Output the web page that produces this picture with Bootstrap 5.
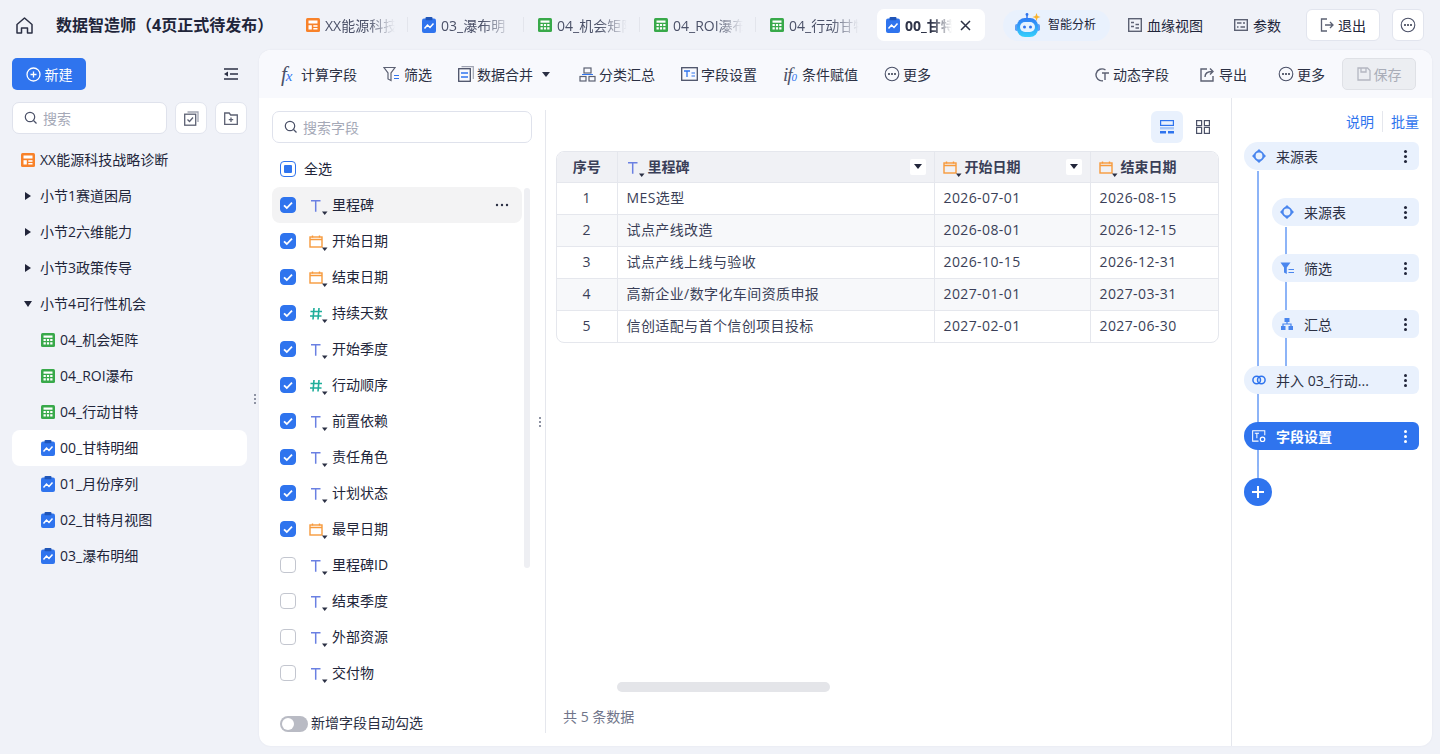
<!DOCTYPE html>
<html lang="zh-CN">
<head>
    <meta charset="UTF-8">
    <meta name="viewport" content="width=device-width, initial-scale=1.0">
    <title>数据智造师</title>
    <link href="https://cdn.jsdelivr.net/npm/bootstrap@5.3.0/dist/css/bootstrap.min.css" rel="stylesheet">
    <style>
        html, body { height: 100%; }
        body { background: #f0f2f8; color: #21253a; font-family: "Open Sans", "Noto Sans CJK SC", sans-serif; font-size: 14px; overflow: hidden; }
        svg { display: block; flex: none; }
        .app-shell { width: 1440px; height: 754px; }

        /* top bar */
        .top-bar { height: 50px; padding-left: 16px; }
        .home-link { width: 17px; margin-right: 23px; }
        .top-title { width: 230px; font-size: 16px; font-weight: 700; color: #21253a; white-space: nowrap; }
        .tab-strip { margin-left: 10px; }
        .page-tab { width: 116px; height: 32px; padding-left: 10px; gap: 5px; position: relative; color: #4b5168; }
        .page-tab::after { content: ""; position: absolute; right: 4px; top: 8px; height: 15px; width: 1px; background: #e3e5ec; }
        .page-tab.no-sep::after { display: none; }
        .tab-name { width: 82px; white-space: nowrap; -webkit-mask-image: linear-gradient(90deg, #000 42px, transparent 70px); mask-image: linear-gradient(90deg, #000 42px, transparent 70px); }
        .page-tab.tab-on { width: 108px; margin-left: 1px; background: #fff; border-radius: 7px; padding-left: 9px; color: #2f3448; font-weight: 700; }
        .page-tab.tab-on .tab-name { width: 52px; margin-right: -2px; -webkit-mask-image: linear-gradient(90deg, #000 26px, transparent 47px); mask-image: linear-gradient(90deg, #000 26px, transparent 47px); }
        .ai-pill { width: 107px; height: 31px; margin-left: 18px; padding-left: 12px; gap: 5px; border-radius: 16px; background: #e9f1fd; font-size: 12px; }
        .head-link { gap: 5px; white-space: nowrap; }
        .lineage-link { margin-left: 18px; }
        .param-link { margin-left: 31px; }
        .head-btn { height: 32px; background: #fff; border: 1px solid #e2e5ee; border-radius: 6px; color: #21253a; font-size: 14px; padding: 0; }
        .quit-btn { width: 74px; margin-left: 25px; }
        .menu-btn { width: 32px; margin-left: 12px; }

        /* left sidebar */
        .side-col { width: 259px; padding: 8px 12px 0 12px; position: relative; }
        .new-btn { width: 74px; height: 32px; background: #2f74ee; border: 0; border-radius: 5px; font-size: 14px; padding: 0; gap: 4px; }
        .fold-row { height: 32px; padding-right: 9px; }
        .tool-search { margin-top: 12px; }
        .search-box { height: 32px; background: #fff; border: 1px solid #dfe2ec; border-radius: 7px; padding: 0 11px; gap: 5px; color: #a5a9b7; }
        .search-box input { border: 0; outline: 0; padding: 0; width: 100%; min-width: 0; background: transparent; font-size: 14px; }
        .search-box input::placeholder { color: #a5a9b7; opacity: 1; }
        .side-search { width: 155px; }
        .square-btn { width: 32px; height: 32px; background: #fff; border: 1px solid #e2e5ee; border-radius: 7px; padding: 0; }
        .tree-list { margin-top: 8px; }
        .tree-row { height: 36px; padding-left: 9px; gap: 5px; white-space: nowrap; border-radius: 8px; }
        .tree-row.tree-leaf { padding-left: 29px; }
        .tree-row.tree-on { background: #fff; }
        .tree-arrow { width: 14px; display: flex; justify-content: center; }
        .tri-right { width: 0; height: 0; border-left: 6px solid #21253a; border-top: 4px solid transparent; border-bottom: 4px solid transparent; }
        .tri-down { width: 0; height: 0; border-top: 6px solid #21253a; border-left: 4px solid transparent; border-right: 4px solid transparent; }
        .drag-dots { position: absolute; display: flex; flex-direction: column; gap: 2px; }
        .drag-dots i { width: 2px; height: 2px; background: #8e93a3; display: block; }
        .dots-side { left: 254px; top: 344px; }
        .dots-field { left: 280px; top: 319px; }
        /* the cjk glyphs sit a touch low in these rows */
        .tree-row > span:last-child, .field-row > span:not(.check-box), .all-row > span:last-child, .auto-row > span:last-child { margin-bottom: 2px; }

        /* main card */
        .main-card { width: 1173px; height: 696px; background: #fff; border-radius: 12px; overflow: hidden; box-shadow: 0 0 2px rgba(60, 70, 110, .08); }
        .tool-bar { height: 48px; background: #f8f9fd; padding: 0 16px 0 22px; }
        .tool-item { gap: 3px; white-space: nowrap; color: #2b3044; }
        .tool-left { gap: 26px; }
        .fx-mark { font-family: "Liberation Serif", serif; font-style: italic; font-size: 21px; line-height: 1; width: 17px; color: #4b5168; white-space: nowrap; }
        .fx-mark b { color: #2f74ee; font-weight: 400; font-size: 15px; margin-left: -1px; }
        .if-mark { font-family: "Liberation Serif", serif; font-style: italic; font-size: 19px; line-height: 1; width: 16px; color: #4b5168; letter-spacing: -1px; white-space: nowrap; }
        .if-mark b { color: #2f74ee; font-weight: 400; font-size: 11px; }
        .merge-caret { margin-left: 6px; margin-right: 3px; border-top-width: 5px; border-top-color: #2b3044; }
        .right-dyn { margin-right: 31px; }
        .right-out { margin-right: 31px; }
        .right-more { margin-right: 17px; }
        .save-btn { width: 74px; height: 32px; background: #eceef2; border: 1px solid #dfe1e6; border-radius: 5px; color: #a9adb8; gap: 3px; }

        /* field panel */
        .field-col { width: 286px; padding: 13px 0 13px 13px; position: relative; }
        .field-search { width: 260px; }
        .all-row { height: 44px; padding-left: 8px; padding-top: 8px; gap: 8px; }
        .field-list { position: relative; height: 504px; }
        .field-row { width: 250px; height: 36px; padding-left: 8px; border-radius: 8px; color: #21253a; }
        .field-row.row-hover { background: #f3f3f4; }
        .check-box { width: 16px; height: 16px; border-radius: 4px; border: 1px solid #c3c6cf; background: #fff; flex: none; display: flex; align-items: center; justify-content: center; }
        .check-box.is-on { background: #2f74ee; border-color: #2f74ee; }
        .check-box.is-mixed { border-color: #2f74ee; }
        .check-box.is-mixed i { width: 8px; height: 8px; background: #2f74ee; border-radius: 1px; display: block; }
        .type-icon { margin: 0 1px 0 13px; }
        .row-more { margin-left: auto; margin-right: 13px; }
        .side-scroll { position: absolute; left: 252px; top: 1px; width: 6px; height: 380px; background: #eeeff3; border-radius: 3px; }
        .auto-row { position: absolute; left: 21px; top: 614px; gap: 3px; white-space: nowrap; color: #2b3044; }
        .fake-switch { width: 28px; height: 16px; border-radius: 8px; background: #b9bbc4; position: relative; }
        .fake-switch::before { content: ""; position: absolute; left: 2px; top: 2px; width: 12px; height: 12px; border-radius: 50%; background: #fff; }

        /* data table */
        .data-col { width: 686px; padding: 13px 12px 0 11px; position: relative; }
        .data-col::before { content: ""; position: absolute; left: 0; top: 12px; bottom: 13px; width: 1px; background: #e5e7ed; }
        .view-row { height: 32px; margin-bottom: 8px; gap: 4px; }
        .view-btn { width: 32px; height: 32px; border-radius: 6px; }
        .view-btn.view-on { background: #e9f1fd; }
        .sheet-wrap { border: 1px solid #e5e7ed; border-radius: 8px; overflow: hidden; }
        .sheet { table-layout: fixed; width: 100%; margin: 0; border-collapse: collapse; color: #3a3f58; font-size: 14px; }
        .sheet th, .sheet td { height: 32px; padding: 0 9px 2px; border: 0; border-right: 1px solid #e5e7ed; border-bottom: 1px solid #e5e7ed; vertical-align: middle; white-space: nowrap; background: transparent; box-shadow: none; color: inherit; letter-spacing: .4px; }
        .sheet th { height: 30px; padding: 0 8px; letter-spacing: 0; }
        .sheet th:last-child, .sheet td:last-child { border-right: 0; }
        .sheet tr:last-child td { border-bottom: 0; }
        .sheet thead th { background: #f0f1f5; font-weight: 700; }
        .sheet tbody tr:nth-child(even) td { background: #f7f8fa; }
        .sheet .col-seq { width: 60px; }
        .sheet .col-name { width: 317px; }
        .sheet .col-date { width: 156px; }
        .sort-chip { width: 16px; height: 16px; background: #fff; border-radius: 2px; margin-left: auto; display: flex; align-items: center; justify-content: center; }
        .sort-chip i { width: 0; height: 0; border-top: 5px solid #21253a; border-left: 4px solid transparent; border-right: 4px solid transparent; }
        .h-scroll { position: absolute; left: 72px; top: 584px; width: 213px; height: 10px; background: #e4e5e9; border-radius: 5px; }
        .row-count { position: absolute; left: 18px; top: 608px; color: #70758a; font-size: 14px; }

        /* flow panel */
        .flow-col { width: 201px; border-left: 1px solid #e5e7ed; padding: 13px 13px 0 12px; position: relative; }
        .flow-links { height: 20px; margin-bottom: 11px; gap: 8px; color: #2f74ee; font-size: 14px; }
        .flow-links span + span { border-left: 1px solid #e5e7ed; padding-left: 8px; }
        .flow-node { height: 28px; background: #e9f1fd; border-radius: 14px 6px 6px 14px; padding: 0 6px 0 8px; position: relative; color: #2b3044; white-space: nowrap; margin-bottom: 28px; }
        .flow-node.node-sub { margin-left: 28px; }
        .flow-node.node-on { background: #2f74ee; color: #fff; font-weight: 700; }
        .node-label { margin-left: 10px; flex: 1; }
        .node-dots { display: flex; flex-direction: column; gap: 2px; width: 16px; align-items: center; }
        .node-dots i { width: 3px; height: 3px; border-radius: 50%; background: #21253a; display: block; }
        .node-on .node-dots i { background: #fff; }
        .link-line { position: absolute; width: 2px; background: #8db4f7; }
        .line-main { left: 25px; top: 73px; height: 308px; }
        .line-sub { left: 53px; top: 129px; height: 140px; }
        .add-node { width: 28px; height: 28px; border-radius: 50%; background: #2f74ee; position: relative; }
    </style>
</head>

<body>
    <!-- shared icons -->
    <svg width="0" height="0" class="position-absolute">
        <defs>
            <linearGradient id="robot-head" x1="0" y1="0" x2="0" y2="1"><stop offset="0" stop-color="#2f7cf6"/><stop offset="1" stop-color="#35d0fb"/></linearGradient>
            <symbol id="i-dash" viewBox="0 0 14 14"><rect width="14" height="14" rx="1.500" fill="#f8822a"/><rect x="2.500" y="2.500" width="9" height="3" fill="#fff"/><rect x="2.500" y="7.200" width="3.300" height="4.300" fill="#fff"/><rect x="7.300" y="7.200" width="4.200" height="1.600" fill="#fff"/><rect x="7.300" y="10" width="4.200" height="1.500" fill="#fff"/></symbol>
            <symbol id="i-chart" viewBox="0 0 14 16"><rect y="1.500" width="14" height="14.500" rx="2" fill="#2f74ee"/><rect x="3.500" width="7" height="3.200" rx="1" fill="#1f55b8"/><path d="M2.500 11.500l3-3.500 2.500 2.500 3.500-4" stroke="#fff" stroke-width="1.500" fill="none"/></symbol>
            <symbol id="i-grid" viewBox="0 0 14 14"><rect width="14" height="14" rx="1.500" fill="#38a94a"/><rect x="2.500" y="2.500" width="9" height="2.200" fill="#fff"/><path d="M2.500 6h2.300v2H2.500zM5.900 6h2.200v2H5.900zM9.200 6h2.300v2H9.200zM2.500 9.200h2.300v2.200H2.500zM5.900 9.200h2.200v2.200H5.900zM9.200 9.200h2.300v2.200H9.200z" fill="#fff"/></symbol>
            <symbol id="t-text" viewBox="0 0 22 22"><path d="M2 6.700h9.500M6.700 6.700v11" stroke="#6a80e2" stroke-width="1.500" fill="none"/><path d="M13 17.500h5.500L15.700 21z" fill="#2b3044"/></symbol>
            <symbol id="t-date" viewBox="0 0 22 22"><rect x="1" y="7" width="12" height="10" fill="none" stroke="#f79a3c" stroke-width="1.400"/><path d="M1 9.500h12M3.500 5.500v2M10.500 5.500v2" stroke="#f79a3c" stroke-width="1.400"/><path d="M13 17.500h5.500L15.700 21z" fill="#2b3044"/></symbol>
            <symbol id="t-num" viewBox="0 0 22 22"><path d="M5 6l-1 11.500M10 6L9 17.500M1.500 9.500h11.500M1 14h11.500" stroke="#1fae9b" stroke-width="1.600" fill="none"/><path d="M13 17.500h5.500L15.700 21z" fill="#2b3044"/></symbol>
            <symbol id="i-tick" viewBox="0 0 12 12"><path d="M2 6.300l2.800 2.700L10 3.600" stroke="#fff" stroke-width="1.800" fill="none"/></symbol>
            <symbol id="i-more" viewBox="0 0 16 16"><circle cx="8" cy="8" r="6.800" fill="none" stroke="#4b5168" stroke-width="1.100"/><circle cx="5" cy="8" r="1" fill="#2f3448"/><circle cx="8" cy="8" r="1" fill="#2f3448"/><circle cx="11" cy="8" r="1" fill="#2f3448"/></symbol>
            <symbol id="i-search" viewBox="0 0 14 14"><circle cx="6" cy="6" r="4.700" fill="none" stroke="#4b5168" stroke-width="1.200"/><path d="M9.500 9.500l3 3" stroke="#4b5168" stroke-width="1.200"/></symbol>
            <symbol id="i-source" viewBox="0 0 14 14"><circle cx="7" cy="7" r="4.400" fill="none" stroke="#4a86ee" stroke-width="2"/><path d="M7 0l2.500 2.500h-5zM7 14l-2.500-2.500h5zM0 7l2.500-2.500v5zM14 7l-2.500 2.500v-5z" fill="#4a86ee"/></symbol>
        </defs>
    </svg>

    <div class="app-shell d-flex flex-column">
        <header class="top-bar d-flex align-items-center">
            <div class="home-link">
                <svg width="17" height="17" viewBox="0 0 17 17"><path d="M1 7.500L8.500 1 16 7.500V16h-4.500v-5h-6v5H1z" fill="none" stroke="#2b3044" stroke-width="1.500" stroke-linejoin="round"/></svg>
            </div>
            <div class="top-title">数据智造师（4页正式待发布）</div>
            <div class="tab-strip d-flex align-items-center">
                <div class="page-tab d-flex align-items-center"><svg width="14" height="14"><use href="#i-dash"/></svg><span class="tab-name">XX能源科技</span></div>
                <div class="page-tab d-flex align-items-center"><svg width="14" height="16"><use href="#i-chart"/></svg><span class="tab-name">03_瀑布明</span></div>
                <div class="page-tab d-flex align-items-center"><svg width="14" height="14"><use href="#i-grid"/></svg><span class="tab-name">04_机会矩阵</span></div>
                <div class="page-tab d-flex align-items-center"><svg width="14" height="14"><use href="#i-grid"/></svg><span class="tab-name">04_ROI瀑布</span></div>
                <div class="page-tab no-sep d-flex align-items-center"><svg width="14" height="14"><use href="#i-grid"/></svg><span class="tab-name">04_行动甘特</span></div>
                <div class="page-tab tab-on no-sep d-flex align-items-center">
                    <svg width="14" height="16"><use href="#i-chart"/></svg><span class="tab-name">00_甘特</span>
                    <svg width="11" height="11" viewBox="0 0 11 11"><path d="M1 1l9 9M10 1l-9 9" stroke="#2b3044" stroke-width="1.500"/></svg>
                </div>
            </div>
            <div class="ai-pill d-flex align-items-center">
                <svg width="28" height="26" viewBox="0 0 28 26"><path d="M12 6V2.500" stroke="#2f74ee" stroke-width="1.500"/><circle cx="12" cy="2.500" r="1.400" fill="#2f74ee"/><path d="M21.500 1l1.100 2.900 2.900 1.100-2.900 1.100-1.100 2.900-1.100-2.900-2.900-1.100 2.900-1.100z" fill="#f9b32f"/><rect x="0" y="12" width="3.500" height="7" rx="1.700" fill="#5b9ff7"/><rect x="21.500" y="12" width="3.500" height="7" rx="1.700" fill="#5b9ff7"/><rect x="2" y="6" width="21" height="19" rx="8" fill="url(#robot-head)"/><rect x="5" y="10" width="15" height="10" rx="5" fill="#e6f3ff"/><circle cx="9.500" cy="15" r="1.500" fill="#2f74ee"/><circle cx="15.500" cy="15" r="1.500" fill="#2f74ee"/></svg>
                <span>智能分析</span>
            </div>
            <div class="head-link lineage-link d-flex align-items-center">
                <svg width="14" height="14" viewBox="0 0 14 14"><rect x=".7" y=".7" width="12.600" height="12.600" fill="none" stroke="#5c6173" stroke-width="1.400"/><path d="M3 4.500h3M3 8.500h3M7.500 6.500H11M7.500 10H11" stroke="#5c6173" stroke-width="1.400"/></svg>
                <span>血缘视图</span>
            </div>
            <div class="head-link param-link d-flex align-items-center">
                <svg width="14" height="14" viewBox="0 0 14 14"><rect x=".7" y="1.700" width="12.600" height="10.600" fill="none" stroke="#5c6173" stroke-width="1.400"/><path d="M3 5h4.500M9 5h2M3 9h1.500M6.500 9H11" stroke="#5c6173" stroke-width="1.400"/></svg>
                <span>参数</span>
            </div>
            <button class="btn head-btn quit-btn d-flex align-items-center justify-content-center gap-1">
                <svg width="14" height="14" viewBox="0 0 14 14"><path d="M7 1H1.500v12H7" fill="none" stroke="#5c6173" stroke-width="1.300"/><path d="M5 7h8M10 4l3 3-3 3" fill="none" stroke="#5c6173" stroke-width="1.300"/></svg>
                退出
            </button>
            <button class="btn head-btn menu-btn d-flex align-items-center justify-content-center">
                <svg width="16" height="16"><use href="#i-more"/></svg>
            </button>
        </header>

        <div class="d-flex flex-grow-1">
            <aside class="side-col">
                <div class="d-flex align-items-center justify-content-between fold-row">
                    <button class="btn btn-primary new-btn d-flex align-items-center justify-content-center">
                        <svg width="15" height="15" viewBox="0 0 15 15"><circle cx="7.500" cy="7.500" r="6.500" fill="none" stroke="#fff" stroke-width="1.300"/><path d="M7.500 4.500v6M4.500 7.500h6" stroke="#fff" stroke-width="1.300"/></svg>
                        新建
                    </button>
                    <svg width="14" height="12" viewBox="0 0 14 12"><path d="M0 1h14M6 6h8M0 11h14" stroke="#2b3044" stroke-width="1.600"/><path d="M0 6l4-2.500v5z" fill="#2b3044"/></svg>
                </div>
                <div class="tool-search d-flex gap-2">
                    <div class="search-box side-search d-flex align-items-center">
                        <svg width="14" height="14"><use href="#i-search"/></svg>
                        <input type="text" placeholder="搜索">
                    </div>
                    <button class="btn square-btn d-flex align-items-center justify-content-center">
                        <svg width="15" height="15" viewBox="0 0 15 15"><rect x=".7" y="3.200" width="11" height="11" fill="none" stroke="#5c6173" stroke-width="1.300"/><path d="M3.500 1h10.500v10" fill="none" stroke="#a2a6b3" stroke-width="1.300"/><path d="M3.500 8.500l2 2 3.500-4" fill="none" stroke="#5c6173" stroke-width="1.300"/></svg>
                    </button>
                    <button class="btn square-btn d-flex align-items-center justify-content-center">
                        <svg width="14" height="13" viewBox="0 0 14 13"><path d="M.7 1h4.500l1.500 2h6.600v9.300H.7z" fill="none" stroke="#5c6173" stroke-width="1.300"/><path d="M7 5.500v4.500M4.800 7.700h4.400" stroke="#5c6173" stroke-width="1.300"/></svg>
                    </button>
                </div>
                <div class="tree-list">
                    <div class="tree-row d-flex align-items-center"><svg width="14" height="14"><use href="#i-dash"/></svg><span>XX能源科技战略诊断</span></div>
                    <div class="tree-row d-flex align-items-center"><span class="tree-arrow"><i class="tri-right"></i></span><span>小节1赛道困局</span></div>
                    <div class="tree-row d-flex align-items-center"><span class="tree-arrow"><i class="tri-right"></i></span><span>小节2六维能力</span></div>
                    <div class="tree-row d-flex align-items-center"><span class="tree-arrow"><i class="tri-right"></i></span><span>小节3政策传导</span></div>
                    <div class="tree-row d-flex align-items-center"><span class="tree-arrow"><i class="tri-down"></i></span><span>小节4可行性机会</span></div>
                    <div class="tree-row tree-leaf d-flex align-items-center"><svg width="14" height="14"><use href="#i-grid"/></svg><span>04_机会矩阵</span></div>
                    <div class="tree-row tree-leaf d-flex align-items-center"><svg width="14" height="14"><use href="#i-grid"/></svg><span>04_ROI瀑布</span></div>
                    <div class="tree-row tree-leaf d-flex align-items-center"><svg width="14" height="14"><use href="#i-grid"/></svg><span>04_行动甘特</span></div>
                    <div class="tree-row tree-leaf tree-on d-flex align-items-center"><svg width="14" height="16"><use href="#i-chart"/></svg><span>00_甘特明细</span></div>
                    <div class="tree-row tree-leaf d-flex align-items-center"><svg width="14" height="16"><use href="#i-chart"/></svg><span>01_月份序列</span></div>
                    <div class="tree-row tree-leaf d-flex align-items-center"><svg width="14" height="16"><use href="#i-chart"/></svg><span>02_甘特月视图</span></div>
                    <div class="tree-row tree-leaf d-flex align-items-center"><svg width="14" height="16"><use href="#i-chart"/></svg><span>03_瀑布明细</span></div>
                </div>
                <div class="drag-dots dots-side"><i></i><i></i><i></i></div>
            </aside>

            <main class="main-card d-flex flex-column">
                <div class="tool-bar d-flex align-items-center justify-content-between">
                    <div class="tool-left d-flex align-items-center">
                        <div class="tool-item d-flex align-items-center"><span class="fx-mark">f<b>x</b></span>计算字段</div>
                        <div class="tool-item d-flex align-items-center">
                            <svg width="18" height="16" viewBox="0 0 18 16"><path d="M1 1.500h11L8 7v7.500L5 13V7z" fill="none" stroke="#5c6173" stroke-width="1.200"/><path d="M11 9.500h5M11 12.500h5" stroke="#2f74ee" stroke-width="1.200"/></svg>筛选
                        </div>
                        <div class="tool-item d-flex align-items-center">
                            <svg width="16" height="16" viewBox="0 0 16 16"><rect x=".7" y="2.700" width="11.600" height="12.600" fill="none" stroke="#4b5168" stroke-width="1.300"/><path d="M3.500.7h11.800V13" fill="none" stroke="#9fa3b2" stroke-width="1.200"/><path d="M3 7h7M3 11h7" stroke="#2f74ee" stroke-width="1.300"/></svg>
                            <span>数据合并</span>
                            <span class="tri-down merge-caret"></span>
                        </div>
                        <div class="tool-item d-flex align-items-center">
                            <svg width="17" height="15" viewBox="0 0 17 15"><rect x="5" y="1" width="7" height="5" fill="none" stroke="#5c6173" stroke-width="1.200"/><path d="M3 7.500h11" stroke="#2f74ee" stroke-width="1.200"/><rect x="1" y="9.500" width="6" height="4.500" fill="none" stroke="#5c6173" stroke-width="1.200"/><rect x="10" y="9.500" width="6" height="4.500" fill="none" stroke="#5c6173" stroke-width="1.200"/></svg>分类汇总
                        </div>
                        <div class="tool-item d-flex align-items-center">
                            <svg width="17" height="14" viewBox="0 0 17 14"><rect x=".7" y=".7" width="15.600" height="12.600" fill="none" stroke="#4b5168" stroke-width="1.300"/><path d="M3 4h6M6 4v6" stroke="#2f74ee" stroke-width="1.300"/><path d="M10.500 6h3.500M10.500 9h3.500" stroke="#2f74ee" stroke-width="1.200"/></svg>字段设置
                        </div>
                        <div class="tool-item d-flex align-items-center"><span class="if-mark">if<b>0</b></span>条件赋值</div>
                        <div class="tool-item d-flex align-items-center"><svg width="16" height="16"><use href="#i-more"/></svg>更多</div>
                    </div>
                    <div class="d-flex align-items-center">
                        <div class="tool-item right-dyn d-flex align-items-center">
                            <svg width="16" height="15" viewBox="0 0 16 15"><path d="M11.500 3A6 6 0 1 0 9 13.800" fill="none" stroke="#5c6173" stroke-width="1.400"/><path d="M8 6h7M11 6v7" stroke="#5c6173" stroke-width="1.400"/></svg>动态字段
                        </div>
                        <div class="tool-item right-out d-flex align-items-center">
                            <svg width="16" height="15" viewBox="0 0 16 15"><path d="M7 2H1v12h12V9" fill="none" stroke="#5c6173" stroke-width="1.400"/><path d="M5 10c0-4 3-5.500 7-5.500M10 1.500l3 3-3 3" fill="none" stroke="#5c6173" stroke-width="1.400"/></svg>导出
                        </div>
                        <div class="tool-item right-more d-flex align-items-center"><svg width="16" height="16"><use href="#i-more"/></svg>更多</div>
                        <div class="save-btn d-flex align-items-center justify-content-center">
                            <svg width="14" height="14" viewBox="0 0 14 14"><path d="M1 1h9.500L13 3.500V13H1z" fill="none" stroke="#b4b7c1" stroke-width="1.300"/><path d="M4 1v4h5V1" fill="none" stroke="#b4b7c1" stroke-width="1.300"/></svg>保存
                        </div>
                    </div>
                </div>

                <div class="d-flex flex-grow-1">
                    <section class="field-col">
                        <div class="search-box field-search d-flex align-items-center">
                            <svg width="14" height="14"><use href="#i-search"/></svg>
                            <input type="text" placeholder="搜索字段">
                        </div>
                        <div class="all-row d-flex align-items-center"><span class="check-box is-mixed"><i></i></span><span>全选</span></div>
                        <div class="field-list">
                            <div class="field-row row-hover d-flex align-items-center"><span class="check-box is-on"><svg width="12" height="12"><use href="#i-tick"/></svg></span><svg class="type-icon" width="22" height="22"><use href="#t-text"/></svg><span>里程碑</span><svg class="row-more" width="14" height="4" viewBox="0 0 14 4"><circle cx="2" cy="2" r="1.200" fill="#2b3044"/><circle cx="7" cy="2" r="1.200" fill="#2b3044"/><circle cx="12" cy="2" r="1.200" fill="#2b3044"/></svg></div>
                            <div class="field-row d-flex align-items-center"><span class="check-box is-on"><svg width="12" height="12"><use href="#i-tick"/></svg></span><svg class="type-icon" width="22" height="22"><use href="#t-date"/></svg><span>开始日期</span></div>
                            <div class="field-row d-flex align-items-center"><span class="check-box is-on"><svg width="12" height="12"><use href="#i-tick"/></svg></span><svg class="type-icon" width="22" height="22"><use href="#t-date"/></svg><span>结束日期</span></div>
                            <div class="field-row d-flex align-items-center"><span class="check-box is-on"><svg width="12" height="12"><use href="#i-tick"/></svg></span><svg class="type-icon" width="22" height="22"><use href="#t-num"/></svg><span>持续天数</span></div>
                            <div class="field-row d-flex align-items-center"><span class="check-box is-on"><svg width="12" height="12"><use href="#i-tick"/></svg></span><svg class="type-icon" width="22" height="22"><use href="#t-text"/></svg><span>开始季度</span></div>
                            <div class="field-row d-flex align-items-center"><span class="check-box is-on"><svg width="12" height="12"><use href="#i-tick"/></svg></span><svg class="type-icon" width="22" height="22"><use href="#t-num"/></svg><span>行动顺序</span></div>
                            <div class="field-row d-flex align-items-center"><span class="check-box is-on"><svg width="12" height="12"><use href="#i-tick"/></svg></span><svg class="type-icon" width="22" height="22"><use href="#t-text"/></svg><span>前置依赖</span></div>
                            <div class="field-row d-flex align-items-center"><span class="check-box is-on"><svg width="12" height="12"><use href="#i-tick"/></svg></span><svg class="type-icon" width="22" height="22"><use href="#t-text"/></svg><span>责任角色</span></div>
                            <div class="field-row d-flex align-items-center"><span class="check-box is-on"><svg width="12" height="12"><use href="#i-tick"/></svg></span><svg class="type-icon" width="22" height="22"><use href="#t-text"/></svg><span>计划状态</span></div>
                            <div class="field-row d-flex align-items-center"><span class="check-box is-on"><svg width="12" height="12"><use href="#i-tick"/></svg></span><svg class="type-icon" width="22" height="22"><use href="#t-date"/></svg><span>最早日期</span></div>
                            <div class="field-row d-flex align-items-center"><span class="check-box"></span><svg class="type-icon" width="22" height="22"><use href="#t-text"/></svg><span>里程碑ID</span></div>
                            <div class="field-row d-flex align-items-center"><span class="check-box"></span><svg class="type-icon" width="22" height="22"><use href="#t-text"/></svg><span>结束季度</span></div>
                            <div class="field-row d-flex align-items-center"><span class="check-box"></span><svg class="type-icon" width="22" height="22"><use href="#t-text"/></svg><span>外部资源</span></div>
                            <div class="field-row d-flex align-items-center"><span class="check-box"></span><svg class="type-icon" width="22" height="22"><use href="#t-text"/></svg><span>交付物</span></div>
                            <div class="side-scroll"></div>
                        </div>
                        <div class="auto-row d-flex align-items-center"><span class="fake-switch"></span><span>新增字段自动勾选</span></div>
                        <div class="drag-dots dots-field"><i></i><i></i><i></i></div>
                    </section>

                    <section class="data-col">
                        <div class="view-row d-flex justify-content-end">
                            <div class="view-btn view-on d-flex align-items-center justify-content-center">
                                <svg width="14" height="14" viewBox="0 0 14 14"><rect x=".6" y=".6" width="12.800" height="4.800" fill="none" stroke="#2f74ee" stroke-width="1.200"/><rect y="7" width="14" height="2.400" fill="#a9c8f8"/><rect y="11" width="6" height="2.500" fill="#2f74ee"/><rect x="8" y="11" width="6" height="2.500" fill="#2f74ee"/></svg>
                            </div>
                            <div class="view-btn d-flex align-items-center justify-content-center">
                                <svg width="14" height="14" viewBox="0 0 14 14"><rect x=".6" y=".6" width="5" height="5" fill="none" stroke="#4b5168" stroke-width="1.200"/><rect x="8.400" y=".6" width="5" height="5" fill="none" stroke="#4b5168" stroke-width="1.200"/><rect x=".6" y="7.400" width="5" height="6" fill="none" stroke="#4b5168" stroke-width="1.200"/><rect x="8.400" y="7.400" width="5" height="6" fill="none" stroke="#4b5168" stroke-width="1.200"/></svg>
                            </div>
                        </div>
                        <div class="sheet-wrap">
                            <table class="table sheet">
                                <colgroup><col class="col-seq"><col class="col-name"><col class="col-date"><col></colgroup>
                                <thead>
                                    <tr>
                                        <th class="text-center">序号</th>
                                        <th><div class="d-flex align-items-center"><svg width="22" height="22"><use href="#t-text"/></svg><span>里程碑</span><span class="sort-chip"><i></i></span></div></th>
                                        <th><div class="d-flex align-items-center"><svg width="22" height="22"><use href="#t-date"/></svg><span>开始日期</span><span class="sort-chip"><i></i></span></div></th>
                                        <th><div class="d-flex align-items-center"><svg width="22" height="22"><use href="#t-date"/></svg><span>结束日期</span></div></th>
                                    </tr>
                                </thead>
                                <tbody>
                                    <tr><td class="text-center">1</td><td>MES选型</td><td>2026-07-01</td><td>2026-08-15</td></tr>
                                    <tr><td class="text-center">2</td><td>试点产线改造</td><td>2026-08-01</td><td>2026-12-15</td></tr>
                                    <tr><td class="text-center">3</td><td>试点产线上线与验收</td><td>2026-10-15</td><td>2026-12-31</td></tr>
                                    <tr><td class="text-center">4</td><td>高新企业/数字化车间资质申报</td><td>2027-01-01</td><td>2027-03-31</td></tr>
                                    <tr><td class="text-center">5</td><td>信创适配与首个信创项目投标</td><td>2027-02-01</td><td>2027-06-30</td></tr>
                                </tbody>
                            </table>
                        </div>
                        <div class="h-scroll"></div>
                        <div class="row-count">共 5 条数据</div>
                    </section>

                    <section class="flow-col">
                        <div class="link-line line-main"></div>
                        <div class="link-line line-sub"></div>
                        <div class="flow-links d-flex justify-content-end align-items-center"><span>说明</span><span>批量</span></div>
                        <div class="flow-node d-flex align-items-center"><svg width="14" height="14"><use href="#i-source"/></svg><span class="node-label">来源表</span><span class="node-dots"><i></i><i></i><i></i></span></div>
                        <div class="flow-node node-sub d-flex align-items-center"><svg width="14" height="14"><use href="#i-source"/></svg><span class="node-label">来源表</span><span class="node-dots"><i></i><i></i><i></i></span></div>
                        <div class="flow-node node-sub d-flex align-items-center">
                            <svg width="14" height="14" viewBox="0 0 14 14"><path d="M.5 1.500h10L6.800 6.500V13L4 11.500v-5z" fill="#4a86ee"/><path d="M8.500 8.500H14M8.500 11.500H14" stroke="#4a86ee" stroke-width="1.200"/></svg>
                            <span class="node-label">筛选</span><span class="node-dots"><i></i><i></i><i></i></span>
                        </div>
                        <div class="flow-node node-sub d-flex align-items-center">
                            <svg width="14" height="14" viewBox="0 0 14 14"><path d="M4.500 1h5v4h-5zM1 9h4.500v4H1zM8.500 9H13v4H8.500z" fill="#4a86ee"/><path d="M3 9V7h8v2M7 5v2" fill="none" stroke="#4a86ee" stroke-width="1.200"/></svg>
                            <span class="node-label">汇总</span><span class="node-dots"><i></i><i></i><i></i></span>
                        </div>
                        <div class="flow-node d-flex align-items-center">
                            <svg width="14" height="14" viewBox="0 0 14 14"><circle cx="4.700" cy="7" r="3.800" fill="none" stroke="#2f74ee" stroke-width="1.500"/><circle cx="9.300" cy="7" r="3.800" fill="none" stroke="#2f74ee" stroke-width="1.500"/></svg>
                            <span class="node-label">并入 03_行动...</span><span class="node-dots"><i></i><i></i><i></i></span>
                        </div>
                        <div class="flow-node node-on d-flex align-items-center">
                            <svg width="14" height="14" viewBox="0 0 15 14"><path d="M7 12.500H.7V1.300h13v5" fill="none" stroke="#fff" stroke-width="1.100"/><path d="M3 4h4.500M5.200 4v5.500" stroke="#fff" stroke-width="1.100"/><circle cx="11.300" cy="10.500" r="2.400" fill="none" stroke="#fff" stroke-width="1.300"/></svg>
                            <span class="node-label">字段设置</span><span class="node-dots"><i></i><i></i><i></i></span>
                        </div>
                        <div class="add-node d-flex align-items-center justify-content-center">
                            <svg width="12" height="12" viewBox="0 0 12 12"><path d="M6 0v12M0 6h12" stroke="#fff" stroke-width="2"/></svg>
                        </div>
                    </section>
                </div>
            </main>
        </div>
    </div>

    <script src="https://cdn.jsdelivr.net/npm/bootstrap@5.3.0/dist/js/bootstrap.bundle.min.js"></script>
</body>
</html>
